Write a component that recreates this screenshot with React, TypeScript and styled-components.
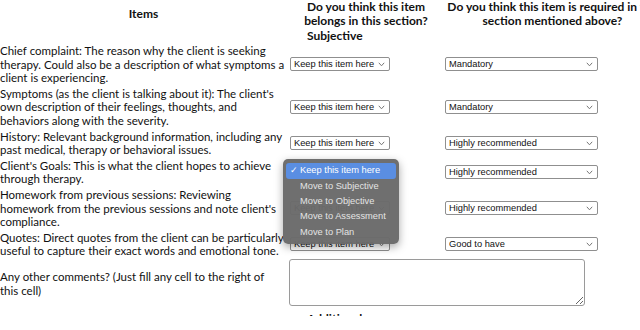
// react
import React from 'react'

// packages
import styled, { createGlobalStyle } from 'styled-components'

// constants
const TEXT_FONT = `Lato, 'Liberation Sans', sans-serif`
const UI_FONT = `'Liberation Sans', Arial, sans-serif`

const MOVE_OPTIONS = [
  'Keep this item here',
  'Move to Subjective',
  'Move to Objective',
  'Move to Assessment',
  'Move to Plan',
]

const NEED_OPTIONS = ['Mandatory', 'Highly recommended', 'Good to have', 'Not needed']

// each item is kept as the lines the cell wraps into
const ROWS = [
  {
    lines: [
      'Chief complaint: The reason why the client is seeking',
      'therapy. Could also be a description of what symptoms a',
      'client is experiencing.',
    ],
    need: 'Mandatory',
  },
  {
    lines: [
      "Symptoms (as the client is talking about it): The client's",
      'own description of their feelings, thoughts, and',
      'behaviors along with the severity.',
    ],
    need: 'Mandatory',
  },
  {
    lines: [
      'History: Relevant background information, including any',
      'past medical, therapy or behavioral issues.',
    ],
    need: 'Highly recommended',
  },
  {
    lines: ["Client's Goals: This is what the client hopes to achieve", 'through therapy.'],
    need: 'Highly recommended',
    open: true,
  },
  {
    lines: [
      'Homework from previous sessions: Reviewing',
      "homework from the previous sessions and note client's",
      'compliance.',
    ],
    need: 'Highly recommended',
  },
  {
    lines: [
      'Quotes: Direct quotes from the client can be particularly',
      'useful to capture their exact words and emotional tone.',
    ],
    need: 'Good to have',
  },
]

// global
const GlobalStyle = createGlobalStyle`
  html, body {
    margin: 0;
    padding: 0;
    background: #fff;
    overflow: hidden;
  }
  body {
    font-family: ${TEXT_FONT};
    color: #111;
  }
`

// styled
const Page = styled.div`
  width: 660px;
  height: 316px;
  overflow: hidden;
`

const Table = styled.div`
  display: grid;
  grid-template-columns: 287px 158px 215px;
  align-items: center;
`

const HeadCell = styled.div`
  font-size: 12px;
  font-weight: 700;
  line-height: 14px;
  text-align: center;
  white-space: nowrap;
`

const SubHead = styled.div`
  grid-column: 2;
  font-size: 12px;
  font-weight: 700;
  line-height: 14px;
  padding: 1px 0 0 20px;
`

const ItemCell = styled.div`
  font-size: 11.5px;
  line-height: 13.6px;
  padding: 1px 0;
`

const Line = styled.span`
  display: block;
  white-space: nowrap;
`

const ControlCell = styled.div<{ $pad: number }>`
  display: flex;
  align-items: center;
  padding-left: ${({ $pad }) => $pad}px;
`

const SelectWrap = styled.span<{ $w: number }>`
  position: relative;
  display: block;
  width: ${({ $w }) => $w}px;
  height: 14px;
`

const Select = styled.select`
  display: block;
  appearance: none;
  box-sizing: border-box;
  width: 100%;
  height: 14px;
  margin: 0;
  padding: 0 12px 0 3px;
  border: 1px solid #8f8f8f;
  border-radius: 2px;
  background: #fff;
  color: #111;
  font-family: ${UI_FONT};
  font-size: 9.3px;
  line-height: 12px;
  outline: none;
`

const Chevron = styled.svg`
  position: absolute;
  right: 5px;
  top: 5px;
  display: block;
  width: 7px;
  height: 5px;
  pointer-events: none;
`

const Menu = styled.ul`
  position: absolute;
  top: -6px;
  left: -7px;
  z-index: 5;
  width: 116px;
  margin: 0;
  padding: 4px 3px 4px;
  box-sizing: border-box;
  list-style: none;
  background: rgba(106, 106, 106, 0.97);
  border-radius: 5px;
  box-shadow: 0 3px 8px rgba(0, 0, 0, 0.35);
  font-family: ${UI_FONT};
  font-size: 9.3px;
`

const MenuItem = styled.li<{ $active: boolean }>`
  height: 15.3px;
  line-height: 15.3px;
  padding-left: 14px;
  border-radius: 3px;
  position: relative;
  color: ${({ $active }) => ($active ? '#fff' : '#e4e4e4')};
  background: ${({ $active }) => ($active ? '#5a8ee2' : 'transparent')};
`

const Check = styled.span`
  position: absolute;
  left: 4px;
  top: 0;
`

const Comments = styled.textarea`
  display: block;
  width: 296px;
  height: 47px;
  margin: 0 0 3px 2px;
  box-sizing: border-box;
  border: 1px solid #9a9a9a;
  border-radius: 3px;
  resize: both;
  font-family: ${UI_FONT};
`

const FootCell = styled.div`
  grid-column: 2;
  font-size: 12px;
  font-weight: 700;
  line-height: 14px;
  padding: 3px 0 0 20px;
`

const Dropdown = ({ options, value, width, open }: { options: string[]; value: string; width: number; open?: boolean }) => {
  return (
    <SelectWrap $w={width}>
      <Select defaultValue={value}>
        {options.map((o) => (
          <option key={o}>{o}</option>
        ))}
      </Select>
      <Chevron viewBox='0 0 7 5'>
        <path d='M0.8 0.8 L3.5 3.8 L6.2 0.8' fill='none' stroke='#777' strokeWidth='1' />
      </Chevron>
      {open && (
        <Menu>
          {options.map((o) => (
            <MenuItem key={o} $active={o === value}>
              {o === value && <Check>✓</Check>}
              {o}
            </MenuItem>
          ))}
        </Menu>
      )}
    </SelectWrap>
  )
}

export default function App() {
  return (
    <Page>
      <GlobalStyle />
      <Table>
        <HeadCell>Items</HeadCell>
        <HeadCell>
          Do you think this item
          <br />
          belongs in this section?
        </HeadCell>
        <HeadCell>
          Do you think this item is required in the
          <br />
          section mentioned above?
        </HeadCell>
        <SubHead>Subjective</SubHead>
        <span />
        {ROWS.map((row) => (
          <React.Fragment key={row.lines[0]}>
            <ItemCell>
              {row.lines.map((l) => (
                <Line key={l}>{l}</Line>
              ))}
            </ItemCell>
            <ControlCell $pad={3}>
              <Dropdown options={MOVE_OPTIONS} value='Keep this item here' width={100} open={row.open} />
            </ControlCell>
            <ControlCell $pad={0}>
              <Dropdown options={NEED_OPTIONS} value={row.need} width={153} />
            </ControlCell>
          </React.Fragment>
        ))}
        <ItemCell>
          <Line>Any other comments? (Just fill any cell to the right of</Line>
          <Line>this cell)</Line>
        </ItemCell>
        <ControlCell $pad={0} style={{ gridColumn: '2 / 4' }}>
          <Comments />
        </ControlCell>
        <FootCell>Additional</FootCell>
      </Table>
    </Page>
  )
}
